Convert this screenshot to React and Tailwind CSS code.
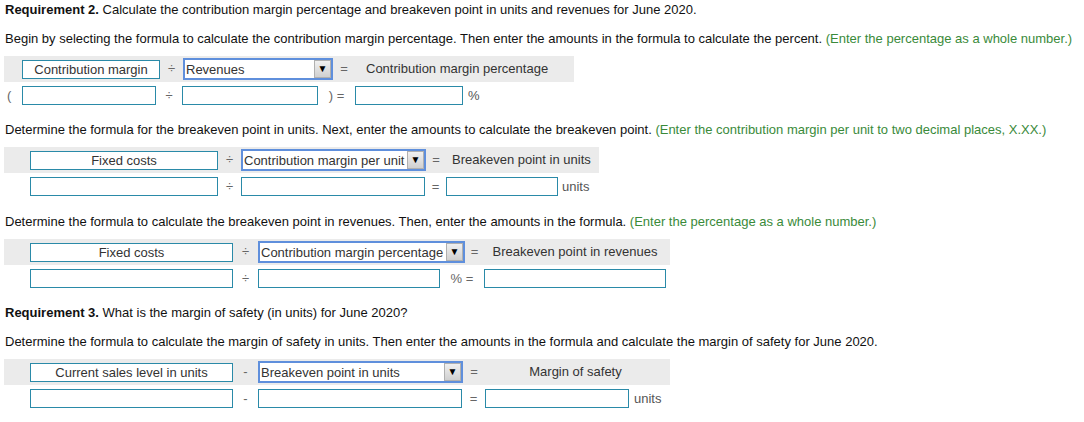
import React from 'react';

const LabelBox = ({ children, className = '' }) => (
  <div className={`h-[19px] bg-white border border-[#2a8aa8] flex items-center justify-center text-[#333] leading-none ${className}`}>
    {children}
  </div>
);

const InputBox = ({ className = '' }) => (
  <div className={`h-[19px] bg-white border border-[#2a8aa8] ${className}`}></div>
);

const Dropdown = ({ value, className = '' }) => (
  <div className={`h-[22px] bg-white border-2 border-[#5f8fdc] flex items-stretch text-[#333] ${className}`}>
    <div className="flex-1 flex items-center pl-[1px] whitespace-nowrap overflow-hidden leading-none">{value}</div>
    <div className="w-[17px] bg-gradient-to-b from-[#f0f0f0] to-[#d0d0d0] border border-[#b0b0b0] flex items-center justify-center text-[10px] text-black leading-none">
      ▼
    </div>
  </div>
);

const Op = ({ children, className = '' }) => (
  <div className={`flex items-center justify-center text-[#666] ${className}`}>{children}</div>
);

const Green = ({ children }) => <span className="text-[#3a8a3a]">{children}</span>;

export default function App() {
  return (
    <div className="w-[1084px] h-[422px] bg-white px-[4px] pt-[2px] text-[13px] text-[#111] overflow-hidden" style={{ fontFamily: '"Liberation Sans", Arial, sans-serif' }}>
      <p className="leading-[16px] pl-[1px]">
        <b>Requirement 2.</b> Calculate the contribution margin percentage and breakeven point in units and revenues for June 2020.
      </p>
      <p className="leading-[16px] mt-[13px] pl-[1px] whitespace-nowrap">
        Begin by selecting the formula to calculate the contribution margin percentage. Then enter the amounts in the formula to calculate the percent.{' '}
        <Green>(Enter the percentage as a whole number.)</Green>
      </p>

      {/* Table 1 */}
      <div className="mt-[9px]">
        <div className="w-[570px] h-[26px] bg-[#ebebeb] flex items-center">
          <div className="w-[18px]"></div>
          <LabelBox className="w-[138px]">Contribution margin</LabelBox>
          <Op className="w-[23px]">÷</Op>
          <Dropdown value="Revenues" className="w-[150px]" />
          <Op className="w-[22px] text-[#555]">=</Op>
          <div className="pl-[11px] text-[#333]">Contribution margin percentage</div>
        </div>
        <div className="h-[27px] flex items-center">
          <div className="w-[18px] pl-[3px] text-[#666]">(</div>
          <InputBox className="w-[134px]" />
          <Op className="w-[26px]">÷</Op>
          <InputBox className="w-[136px]" />
          <Op className="w-[37px] text-[#555]">) =</Op>
          <InputBox className="w-[108px]" />
          <div className="pl-[5px] text-[#555]">%</div>
        </div>
      </div>

      <p className="leading-[16px] mt-[13px] pl-[1px] whitespace-nowrap">
        Determine the formula for the breakeven point in units. Next, enter the amounts to calculate the breakeven point.{' '}
        <Green>(Enter the contribution margin per unit to two decimal places, X.XX.)</Green>
      </p>

      {/* Table 2 */}
      <div className="mt-[9px]">
        <div className="w-[595px] h-[26px] bg-[#ebebeb] flex items-center">
          <div className="w-[26px]"></div>
          <LabelBox className="w-[188px]">Fixed costs</LabelBox>
          <Op className="w-[23px]">÷</Op>
          <Dropdown value="Contribution margin per unit" className="w-[185px]" />
          <Op className="w-[20px] text-[#555]">=</Op>
          <div className="pl-[6px] text-[#333]">Breakeven point in units</div>
        </div>
        <div className="h-[27px] flex items-center">
          <div className="w-[26px]"></div>
          <InputBox className="w-[188px]" />
          <Op className="w-[23px]">÷</Op>
          <InputBox className="w-[184px]" />
          <Op className="w-[21px] text-[#555]">=</Op>
          <InputBox className="w-[112px]" />
          <div className="pl-[4px] text-[#555]">units</div>
        </div>
      </div>

      <p className="leading-[16px] mt-[14px] pl-[1px] whitespace-nowrap">
        Determine the formula to calculate the breakeven point in revenues. Then, enter the amounts in the formula.{' '}
        <Green>(Enter the percentage as a whole number.)</Green>
      </p>

      {/* Table 3 */}
      <div className="mt-[9px]">
        <div className="w-[666px] h-[26px] bg-[#ebebeb] flex items-center">
          <div className="w-[26px]"></div>
          <LabelBox className="w-[203px]">Fixed costs</LabelBox>
          <Op className="w-[25px]">÷</Op>
          <Dropdown value="Contribution margin percentage" className="w-[207px]" />
          <Op className="w-[19px] text-[#555]">=</Op>
          <div className="w-[182px] text-center text-[#333]">Breakeven point in revenues</div>
        </div>
        <div className="h-[27px] flex items-center">
          <div className="w-[26px]"></div>
          <InputBox className="w-[203px]" />
          <Op className="w-[25px]">÷</Op>
          <InputBox className="w-[182px]" />
          <Op className="w-[44px] text-[#555]">% =</Op>
          <InputBox className="w-[182px]" />
        </div>
      </div>

      <p className="leading-[16px] mt-[13px] pl-[1px]">
        <b>Requirement 3.</b> What is the margin of safety (in units) for June 2020?
      </p>
      <p className="leading-[16px] mt-[13px] pl-[1px] whitespace-nowrap">
        Determine the formula to calculate the margin of safety in units. Then enter the amounts in the formula and calculate the margin of safety for June 2020.
      </p>

      {/* Table 4 */}
      <div className="mt-[9px]">
        <div className="w-[666px] h-[26px] bg-[#ebebeb] flex items-center">
          <div className="w-[26px]"></div>
          <LabelBox className="w-[203px]">Current sales level in units</LabelBox>
          <Op className="w-[25px]">-</Op>
          <Dropdown value="Breakeven point in units" className="w-[205px]" />
          <Op className="w-[22px] text-[#555]">=</Op>
          <div className="w-[181px] text-center text-[#333]">Margin of safety</div>
        </div>
        <div className="h-[27px] flex items-center">
          <div className="w-[26px]"></div>
          <InputBox className="w-[203px]" />
          <Op className="w-[25px]">-</Op>
          <InputBox className="w-[204px]" />
          <Op className="w-[23px] text-[#555]">=</Op>
          <InputBox className="w-[144px]" />
          <div className="pl-[5px] text-[#555]">units</div>
        </div>
      </div>
    </div>
  );
}
